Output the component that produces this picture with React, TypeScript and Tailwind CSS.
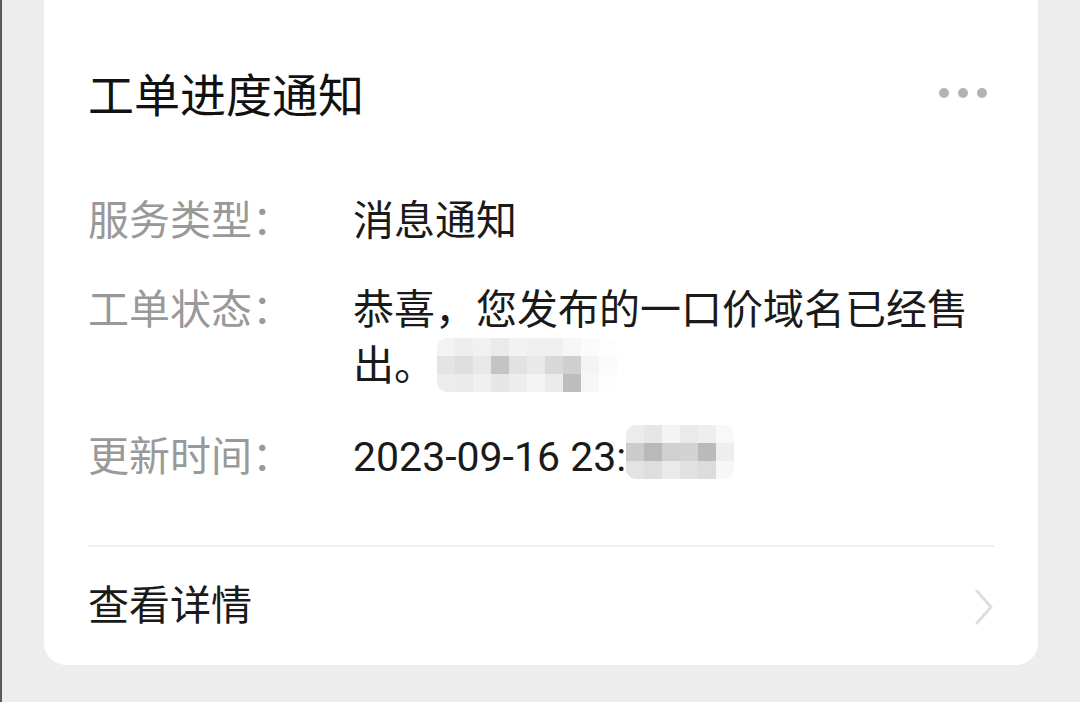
import React from "react";

const font = { fontFamily: '"Roboto", "Noto Sans CJK SC", sans-serif' };

// pixelated (mosaic) blur over private info
const mosaicA = [
  ["#f3f3f3", "#eeeeee", "#f1f1f1", "#eaeaea", "#f2f2f2", "#efefef", "#f0f0f0", "#f6f6f6", "#fbfbfb", "#fdfdfd"],
  ["#e4e4e4", "#dedede", "#e8e8e8", "#c4c4c4", "#e2e2e2", "#e9e9e9", "#d8d8d8", "#cfcfcf", "#f4f4f4", "#fbfbfb"],
  ["#ececec", "#eaeaea", "#f0f0f0", "#e6e6e6", "#ededed", "#f3f3f3", "#ebebeb", "#bdbdbd", "#f7f7f7", "#fdfdfd"],
];

const mosaicB = [
  ["#ececec", "#e6e6e6", "#f4f4f4", "#eaeaea", "#eeeeee", "#f8f8f8"],
  ["#cccccc", "#b9b9b9", "#d0d0d0", "#d3d3d3", "#bababa", "#eeeeee"],
  ["#e3e3e3", "#dedede", "#eaeaea", "#e1e1e1", "#dcdcdc", "#f7f7f7"],
];

function Mosaic({ cells }: { cells: string[][] }) {
  return (
    <span className="inline-flex flex-col rounded-[10px] overflow-hidden align-middle blur-[0.6px]">
      {cells.map((row, i) => (
        <span key={i} className="flex">
          {row.map((c, j) => (
            <span key={j} className="block w-[18px] h-[18px]" style={{ backgroundColor: c }} />
          ))}
        </span>
      ))}
    </span>
  );
}

function InfoRow({ label, children }: { label: string; children: React.ReactNode }) {
  return (
    <div className="flex text-[41px] leading-[56px]">
      <div className="w-[265px] shrink-0 text-[#999999]">{label}</div>
      <div className="w-[630px] text-[#1a1a1a]">{children}</div>
    </div>
  );
}

export default function App() {
  return (
    <div className="h-[702px] w-full bg-[#ededed] flex overflow-hidden" style={font}>
      <div className="w-[2px] bg-[#5a5a5a]" />
      <div className="ml-[42px] w-[994px] h-[665px] bg-white rounded-b-[22px] px-[44px] flex flex-col">
        {/* header */}
        <div className="pt-[66px] flex items-center justify-between">
          <h1 className="text-[46px] leading-[60px] text-[#111111] font-normal">工单进度通知</h1>
          <div className="flex gap-[9px] mr-[7px] -mt-[6px]">
            <span className="block w-[10px] h-[10px] rounded-full bg-[#b3b3b3]" />
            <span className="block w-[10px] h-[10px] rounded-full bg-[#b3b3b3]" />
            <span className="block w-[10px] h-[10px] rounded-full bg-[#b3b3b3]" />
          </div>
        </div>

        {/* details */}
        <div className="mt-[67px] flex flex-col gap-[33px]">
          <InfoRow label="服务类型：">消息通知</InfoRow>
          <InfoRow label="工单状态：">
            恭喜，您发布的一口价域名已经售
            <br />
            出。
            <span className="inline-block ml-[2px] -translate-y-[4px]">
              <Mosaic cells={mosaicA} />
            </span>
          </InfoRow>
          <InfoRow label="更新时间：">
            2023-09-16 23:
            <span className="inline-block -translate-y-[8px]">
              <Mosaic cells={mosaicB} />
            </span>
          </InfoRow>
        </div>

        {/* footer */}
        <div className="mt-[58px] border-t-2 border-[#f0f0f0] flex-1 flex items-center justify-between pt-[2px]">
          <span className="text-[41px] text-[#1a1a1a]">查看详情</span>
          <svg width="20" height="36" viewBox="0 0 20 36" fill="none">
            <path d="M3 2 L17 18 L3 34" stroke="#dedede" strokeWidth="3" strokeLinecap="round" strokeLinejoin="round" />
          </svg>
        </div>
      </div>
    </div>
  );
}
